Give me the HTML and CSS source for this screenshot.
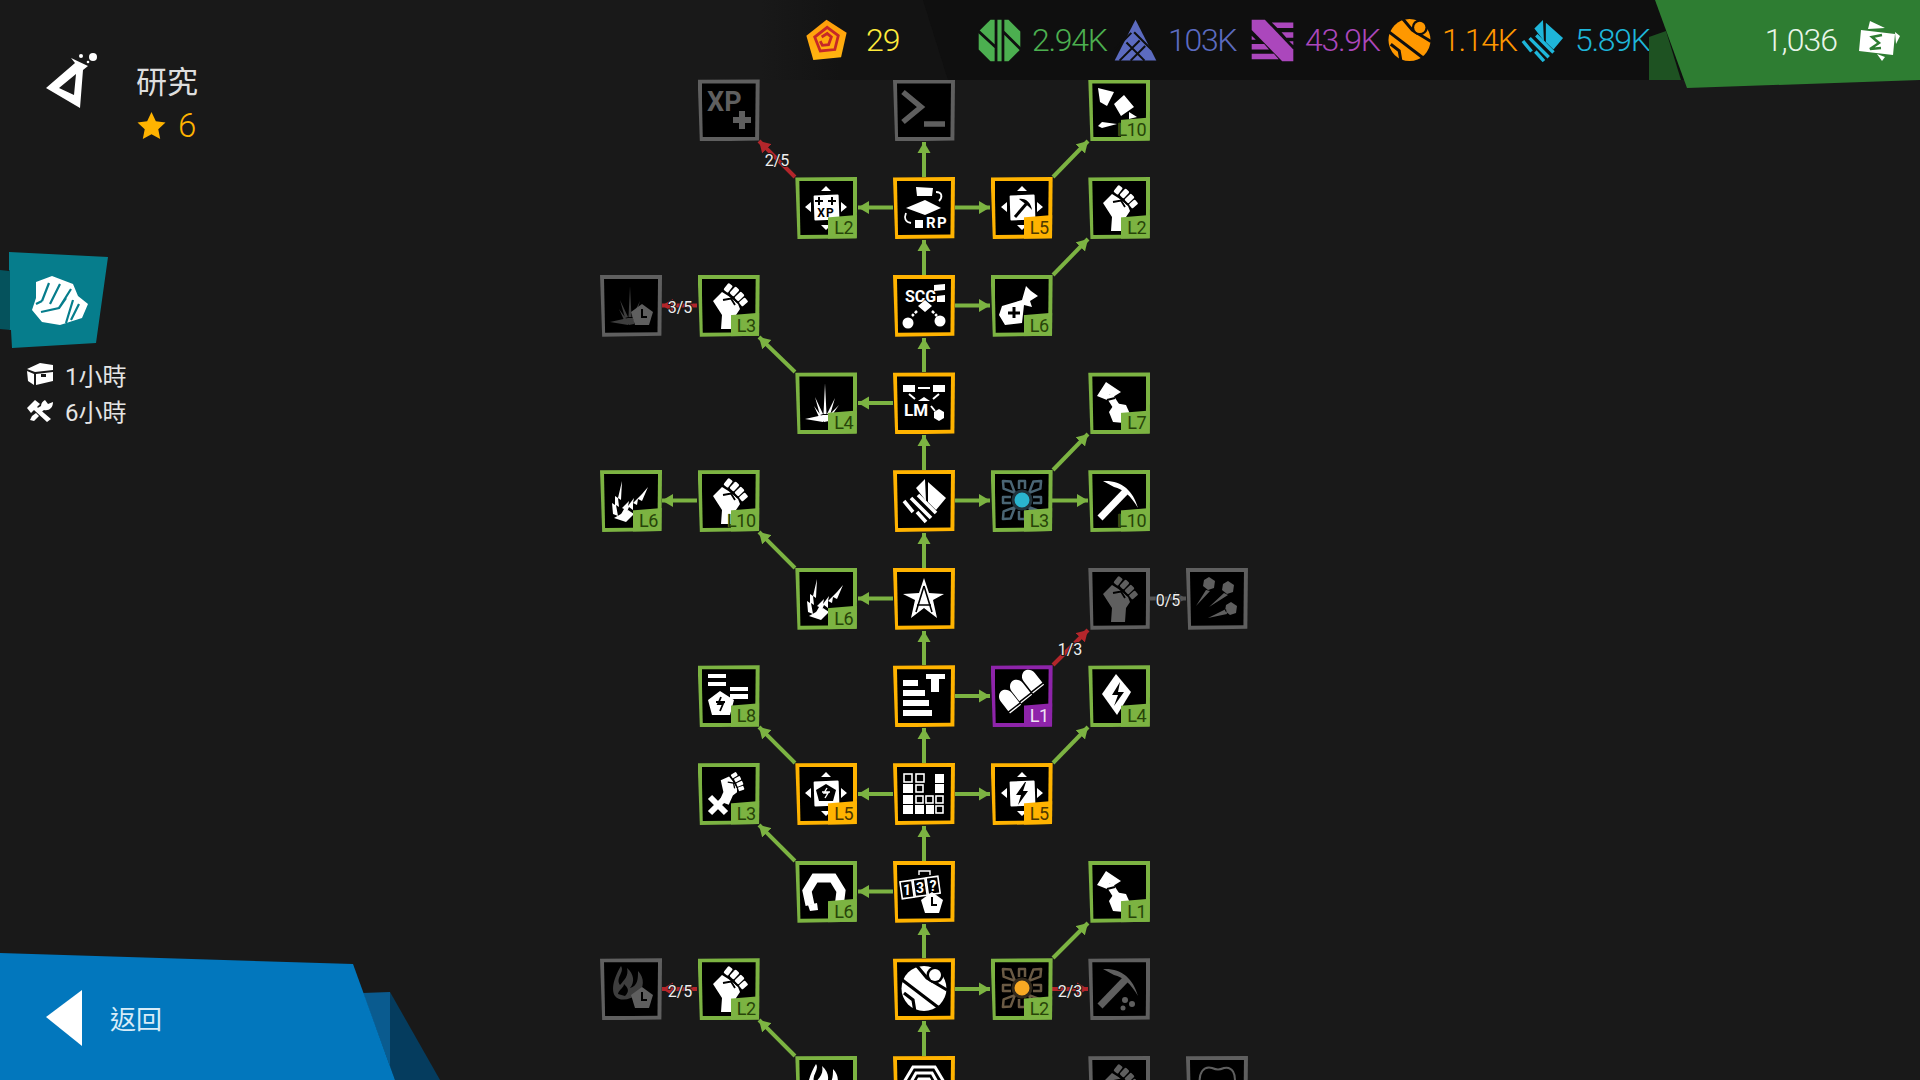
FILE: index.html
```html
<!DOCTYPE html>
<html lang="zh-Hant">
  <head>
    <meta charset="UTF-8" />
    <meta name="viewport" content="width=device-width, initial-scale=1.0" />
    <title>研究</title>
    <link rel="stylesheet" href="styles.css">
  </head>
  <body>
    <!-- shared icon shapes, all drawn in a 62x62 box -->
    <svg class="defs" aria-hidden="true">
      <defs>
        <linearGradient id="tokenfill" x1="0" y1="0" x2="0" y2="1">
          <stop offset="0" stop-color="#ff9d0a" />
          <stop offset="1" stop-color="#ffb511" />
        </linearGradient>
        <marker id="head-green" markerUnits="userSpaceOnUse" markerWidth="12" markerHeight="14" refX="11" refY="7" orient="auto">
          <path d="M0 0.5 11 7 0 13.5Z" fill="#7cb342" />
        </marker>
        <marker id="head-red" markerUnits="userSpaceOnUse" markerWidth="12" markerHeight="14" refX="11" refY="7" orient="auto">
          <path d="M0 0.5 11 7 0 13.5Z" fill="#b3262b" />
        </marker>
        <marker id="head-grey" markerUnits="userSpaceOnUse" markerWidth="12" markerHeight="14" refX="11" refY="7" orient="auto">
          <path d="M0 0.5 11 7 0 13.5Z" fill="#555" />
        </marker>

        <g id="fist">
          <path d="M15 26 24 17 32 22 40 29 42 34 38 40 37 54H23L24 40Z" />
          <rect x="-2.8" y="-4.5" width="5.6" height="8.5" rx="1.2" transform="translate(30 13) rotate(38)" />
          <rect x="-2.8" y="-4.5" width="5.6" height="9" rx="1.2" transform="translate(36.5 16.5) rotate(42)" />
          <rect x="-2.8" y="-4.5" width="5.6" height="9" rx="1.2" transform="translate(41.5 21.5) rotate(46)" />
          <rect x="-2.8" y="-4" width="5.6" height="8" rx="1.2" transform="translate(45.5 27) rotate(50)" />
          <path d="M25 25 33 23.5 37 30" fill="none" stroke="#000" stroke-width="1.8" />
          <path d="M31 20 35 24M36 24 40 28" fill="none" stroke="#000" stroke-width="1.4" />
        </g>
        <g id="box">
          <path d="M31 9l5 5H26zM10 30l6-5v10zM52 30l-6-5v10zM31 53l-5-5h10z" />
          <rect x="19" y="18" width="25" height="25" rx="1" transform="rotate(-2 31 30)" />
        </g>
        <g id="bolt">
          <path d="M34 19 25 32h5l-3 10 10-14h-5l3-9Z" />
        </g>
        <g id="pick">
          <path d="M12 48 38 21" fill="none" stroke="currentColor" stroke-width="7" />
          <path d="M15 11C33 10 45 20 50 38 43 26 35 19 26 17Z" />
        </g>
        <g id="hammer">
          <path d="M9 24 18 10 33 20 25 25 22 22 19 28Z" />
          <path d="M21 23 30 37" fill="none" stroke="currentColor" stroke-width="7" />
          <path d="M27 31 38 33 42 42 36 51 25 50 21 40Z" />
          <path d="M19 28 27 26" fill="none" stroke="#000" stroke-width="2" />
        </g>
        <g id="burst">
          <path d="M30 11 31.5 42H28.500ZM20 25 28 42 25 43ZM19 34 27 45 24 45ZM40 26 32 42 35 43ZM44 33 33 44 35 46ZM10 47 28 43 30 48 28 50ZM28 43H35L34 49 29 50Z" />
        </g>
        <g id="sparks">
          <path d="M13 44 12 33 15 35 15 26 18 28 22 11 21 30 18 28 19 37 16 35 18 46Z" />
          <path d="M19 48 24 39 22 38 29 31 28 36 34 28 33 33 42 24 48 17 42 31 38 29 37 35 33 33 33 40 29 37 26 44Z" />
          <path d="M14 48 28 40 34 44 26 52Z" />
        </g>
        <g id="flames">
          <path d="M21 8C25 14 15 20 20 27 24 22 29 18 27 10 34 16 35 24 30 30 38 28 38 20 38 13 45 20 44 30 38 36 30 42 20 44 15 38 10 30 16 16 21 8Z" />
          <path d="M18 36C19 31 24 30 24 26 28 30 30 33 25 38Z" fill="#000" />
        </g>
        <g id="pent">
          <path d="M42 29 53 37 49 50H35L31 37Z" />
          <path d="M42 34V42H47" fill="none" stroke="#000" stroke-width="2" />
        </g>
        <g id="crystal">
          <path d="M23 18 32 9 33 31ZM35 12 53 28 43 40 35 32Z" />
          <path d="M11 31 20 42M18 28 38 48M25 25 43 43M24 42 33 52" fill="none" stroke="currentColor" stroke-width="3.6" />
        </g>
        <g id="orb">
          <circle cx="31" cy="30.500" r="22.500" />
          <path d="M8 21 46 50M24 8 34 20 54 32M11 35 20 42 22 54" fill="none" stroke="var(--cut, #000)" stroke-width="3.200" />
          <circle cx="42" cy="17" r="8.500" fill="var(--cut, #000)" />
          <circle cx="42" cy="17" r="6" />
        </g>
        <g id="shell">
          <path d="M-7 9V-6C-7-11-3-14 0-14 3-14 7-11 7-6V9Z" />
          <path d="M-8 7H8" stroke="#000" stroke-width="1.5" />
        </g>
        <g id="mine" fill="none" stroke="currentColor" stroke-width="2.500" stroke-linejoin="round">
          <path d="M31 20 26 9 31 3 36 9Z" transform="rotate(45 31 30)" />
          <path d="M31 20 26 9 31 3 36 9Z" transform="rotate(135 31 30)" />
          <path d="M31 20 26 9 31 3 36 9Z" transform="rotate(225 31 30)" />
          <path d="M31 20 26 9 31 3 36 9Z" transform="rotate(315 31 30)" />
          <path d="M28 19 28 11H34V19" />
          <path d="M28 19 28 11H34V19" transform="rotate(90 31 30)" />
          <path d="M28 19 28 11H34V19" transform="rotate(180 31 30)" />
          <path d="M28 19 28 11H34V19" transform="rotate(270 31 30)" />
        </g>
        <g id="res-green">
          <path d="M18 1H44L61 18V44L44 61H18L1 44V18Z" />
          <path d="M0 17 26 41M26 0V62M36 0V62M36 18 62 44" fill="none" stroke="#0f0f0f" stroke-width="4" />
        </g>
        <g id="res-blue">
          <path d="M31 1 61 60H1Z" />
          <path d="M0 45 25 20M8 60 37 31M24 60 45 39M18 34 44 60M29 19 54 44" fill="none" stroke="#0f0f0f" stroke-width="3" />
        </g>
        <g id="res-purple">
          <path d="M1 1H20L61 44V61H45L1 16Z" />
          <path d="M30 5H61V13H38ZM44 19H61V27H51ZM55 32 61 38V32ZM1 24 7 30H1ZM1 36H19L26 44H1ZM1 50H33L40 58H1Z" />
        </g>
      </defs>
    </svg>

    <!-- links between the research nodes -->
    <svg class="edges" viewBox="0 0 1920 1080">
      <g class="edge-green">
        <line x1="924" y1="177" x2="924" y2="142" />
        <line x1="924" y1="275" x2="924" y2="240" />
        <line x1="924" y1="372" x2="924" y2="338" />
        <line x1="924" y1="470" x2="924" y2="435" />
        <line x1="924" y1="568" x2="924" y2="533" />
        <line x1="924" y1="665" x2="924" y2="631" />
        <line x1="924" y1="763" x2="924" y2="728" />
        <line x1="924" y1="861" x2="924" y2="826" />
        <line x1="924" y1="958" x2="924" y2="924" />
        <line x1="924" y1="1056" x2="924" y2="1021" />

        <line x1="893" y1="207.5" x2="858" y2="207.5" />
        <line x1="955" y1="207.5" x2="990" y2="207.5" />
        <line x1="955" y1="305.5" x2="990" y2="305.5" />
        <line x1="893" y1="403" x2="858" y2="403" />
        <line x1="955" y1="500.5" x2="990" y2="500.5" />
        <line x1="1052" y1="500.5" x2="1088" y2="500.5" />
        <line x1="697" y1="500.5" x2="662" y2="500.5" />
        <line x1="893" y1="598.5" x2="858" y2="598.5" />
        <line x1="955" y1="696" x2="990" y2="696" />
        <line x1="893" y1="794" x2="858" y2="794" />
        <line x1="955" y1="794" x2="990" y2="794" />
        <line x1="893" y1="891.5" x2="858" y2="891.5" />
        <line x1="955" y1="989" x2="990" y2="989" />

        <line x1="1053" y1="177" x2="1088" y2="141" />
        <line x1="1053" y1="275" x2="1088" y2="239" />
        <line x1="795" y1="372" x2="759" y2="337" />
        <line x1="1053" y1="470" x2="1088" y2="434" />
        <line x1="795" y1="568" x2="759" y2="532" />
        <line x1="795" y1="763" x2="759" y2="727" />
        <line x1="1053" y1="763" x2="1088" y2="727" />
        <line x1="795" y1="861" x2="759" y2="825" />
        <line x1="1053" y1="958" x2="1088" y2="923" />
        <line x1="795" y1="1056" x2="759" y2="1020" />
      </g>
      <g class="edge-red">
        <line x1="795" y1="177" x2="759" y2="141" />
        <line x1="697" y1="305.5" x2="662" y2="305.5" />
        <line x1="1053" y1="665" x2="1088" y2="630" />
        <line x1="697" y1="989" x2="662" y2="989" />
        <line x1="1052" y1="989" x2="1088" y2="989" />
      </g>
      <g class="edge-grey">
        <line x1="1150" y1="598.5" x2="1186" y2="598.5" />
      </g>
      <g class="edge-labels">
        <text x="777" y="160">2/5</text>
        <text x="680" y="307">3/5</text>
        <text x="1070" y="649">1/3</text>
        <text x="1168" y="600">0/5</text>
        <text x="680" y="991">2/5</text>
        <text x="1070" y="991">2/3</text>
      </g>
    </svg>

    <main class="tree">
      <!-- row 1 -->
      <div class="node off c2 r1">
        <svg class="icon" viewBox="0 0 62 62"><text class="tx" x="9" y="32" font-size="27">XP</text><path d="M44 32V50M35 41H53" fill="none" stroke="currentColor" stroke-width="6" /></svg>
      </div>
      <div class="node off c4 r1">
        <svg class="icon" viewBox="0 0 62 62"><path d="M10 13 28 28 10 43M31 45H52" fill="none" stroke="currentColor" stroke-width="5.5" /></svg>
      </div>
      <div class="node green c6 r1">
        <svg class="icon" viewBox="0 0 62 62"><path d="M10 9 26 13 19 27 12 23ZM36 16 46 28 33 37 26 25ZM41 33 49 38 41 40ZM10 47 14 43 29 45 14 49Z" /></svg>
        <span class="badge">L10</span>
      </div>

      <!-- row 2 -->
      <div class="node green c3 r2">
        <svg class="icon" viewBox="0 0 62 62"><use href="#box" /><path d="M24 20V28M20 24H28M37 20V28M33 24H41" stroke="#000" stroke-width="2" /><text class="tx" x="31" y="40" text-anchor="middle" font-size="12" fill="#000" letter-spacing="1">XP</text></svg>
        <span class="badge">L2</span>
      </div>
      <div class="node gold c4 r2">
        <svg class="icon" viewBox="0 0 62 62">
          <path d="M23 10 40 11 39 19 24 19ZM13 31 32 23 48 31 32 38ZM22 43H30V51H22Z" />
          <path d="M43 15C49 15 50 20 46 24M13 36C11 41 12 45 18 46" fill="none" stroke="currentColor" stroke-width="1.8" />
          <text class="tx" x="33" y="51" font-size="15" letter-spacing="1.5">RP</text>
        </svg>
      </div>
      <div class="node gold c5 r2">
        <svg class="icon" viewBox="0 0 62 62"><use href="#box" /><path d="M24 40 36 26" stroke="#000" stroke-width="3" /><path d="M28 22C35 21 40 26 41 33 37 28 33 26 28 22Z" fill="#000" /></svg>
        <span class="badge">L5</span>
      </div>
      <div class="node green c6 r2">
        <svg class="icon" viewBox="0 0 62 62"><use href="#fist" /></svg>
        <span class="badge">L2</span>
      </div>

      <!-- row 3 -->
      <div class="node off dim c1 r3">
        <svg class="icon" viewBox="0 0 62 62"><use href="#burst" class="faint" /><use href="#pent" /></svg>
      </div>
      <div class="node green c2 r3">
        <svg class="icon" viewBox="0 0 62 62"><use href="#fist" /></svg>
        <span class="badge">L3</span>
      </div>
      <div class="node gold c4 r3">
        <svg class="icon" viewBox="0 0 62 62">
          <text class="tx" x="12" y="27" font-size="16">SCG</text>
          <path d="M41 10 52 9V15L41 16ZM44 21 52 20V27H44ZM32 25 39 31 32 37 25 31Z" />
          <circle cx="15" cy="48" r="5.5" /><circle cx="47" cy="46" r="5.5" />
          <path d="M24 36 19 41M39 36 44 41" stroke="currentColor" stroke-width="2.5" stroke-dasharray="3 1.5" />
        </svg>
      </div>
      <div class="node green c5 r3">
        <svg class="icon" viewBox="0 0 62 62"><path d="M35 11 40 16 47 21 39 26 41 32 33 30 31 48 14 50 8 40 11 31 31 25Z" /><path d="M23 32V43M17 38H29" stroke="#000" stroke-width="3" /></svg>
        <span class="badge">L6</span>
      </div>

      <!-- row 4 -->
      <div class="node green c3 r4">
        <svg class="icon" viewBox="0 0 62 62"><use href="#burst" /></svg>
        <span class="badge">L4</span>
      </div>
      <div class="node gold c4 r4">
        <svg class="icon" viewBox="0 0 62 62">
          <path d="M10 13H22V20H10ZM40 13H52V20H40ZM25 15H37V17H25ZM25 29 31 25 37 29Z" />
          <path d="M16 22 22 27M46 22 40 27M38 34 42 39" stroke="currentColor" stroke-width="2" />
          <text class="tx" x="11" y="44" font-size="17">LM</text>
          <path d="M46 37 51 40V46L46 49 41 46V40Z" />
        </svg>
      </div>
      <div class="node green c6 r4">
        <svg class="icon" viewBox="0 0 62 62"><use href="#hammer" /></svg>
        <span class="badge">L7</span>
      </div>

      <!-- row 5 -->
      <div class="node green c1 r5">
        <svg class="icon" viewBox="0 0 62 62"><use href="#sparks" /></svg>
        <span class="badge">L6</span>
      </div>
      <div class="node green c2 r5">
        <svg class="icon" viewBox="0 0 62 62"><use href="#fist" /></svg>
        <span class="badge">L10</span>
      </div>
      <div class="node gold c4 r5">
        <svg class="icon" viewBox="0 0 62 62"><use href="#crystal" /></svg>
      </div>
      <div class="node green c5 r5">
        <svg class="icon mine-blue" viewBox="0 0 62 62"><use href="#mine" /><circle class="core" cx="31" cy="30" r="9" /></svg>
        <span class="badge">L3</span>
      </div>
      <div class="node green c6 r5">
        <svg class="icon" viewBox="0 0 62 62"><use href="#pick" /></svg>
        <span class="badge">L10</span>
      </div>

      <!-- row 6 -->
      <div class="node green c3 r6">
        <svg class="icon" viewBox="0 0 62 62"><use href="#sparks" /></svg>
        <span class="badge">L6</span>
      </div>
      <div class="node gold c4 r6">
        <svg class="icon" viewBox="0 0 62 62"><path d="M31 10 36 25 51 26 40 32 44 50 31 40 18 50 22 32 10 26 26 25Z" /><path d="M31 18 23 44M31 18 39 44M24 37H38" fill="none" stroke="#000" stroke-width="1.6" /></svg>
      </div>
      <div class="node off c6 r6">
        <svg class="icon" viewBox="0 0 62 62"><use href="#fist" /></svg>
      </div>
      <div class="node off dim c7 r6">
        <svg class="icon" viewBox="0 0 62 62">
          <path d="M23 9 29 13 28 20 22 22 17 18 18 12ZM20 22 10 38 24 23ZM42 13 48 17 47 24 41 26 36 22 37 16ZM38 25 23 39 42 27ZM45 34 51 38 50 45 44 47 39 43 40 37ZM40 41 22 50 41 46Z" />
        </svg>
      </div>

      <!-- row 7 -->
      <div class="node green c2 r7">
        <svg class="icon" viewBox="0 0 62 62"><path d="M10 9H28V13H10ZM10 17H28V21H10ZM32 22H50V26H32ZM32 29H50V34H32ZM22 26 36 35 32 50H14L10 35Z" /><path d="M23 32 20 39H25L22 46M18 37H27" fill="none" stroke="#000" stroke-width="1.8" /></svg>
        <span class="badge">L8</span>
      </div>
      <div class="node gold c4 r7">
        <svg class="icon" viewBox="0 0 62 62"><path d="M10 15H25V21H10ZM10 25H32V31H10ZM10 35H36V41H10ZM10 45H39V51H10ZM33 9H52V14H46V27H38V14H33Z" /></svg>
      </div>
      <div class="node purple c5 r7">
        <svg class="icon" viewBox="0 0 62 62">
          <use href="#shell" transform="translate(42 17) rotate(-38)" />
          <use href="#shell" transform="translate(30 27) rotate(-38)" />
          <use href="#shell" transform="translate(19 37) rotate(-38)" />
        </svg>
        <span class="badge">L1</span>
      </div>
      <div class="node green c6 r7">
        <svg class="icon" viewBox="0 0 62 62"><path d="M28 9 43 27 29 50 14 29Z" /><path d="M32 17 24 30H30L26 41 36 27H30Z" fill="#000" /></svg>
        <span class="badge">L4</span>
      </div>

      <!-- row 8 -->
      <div class="node green c2 r8">
        <svg class="icon" viewBox="0 0 62 62"><g transform="translate(19 -4) rotate(20) scale(.72)"><use href="#fist" /></g><path d="M12 34 28 50M12 50 28 34" stroke="currentColor" stroke-width="6" /></svg>
        <span class="badge">L3</span>
      </div>
      <div class="node gold c3 r8">
        <svg class="icon" viewBox="0 0 62 62"><use href="#box" /><path d="M31 21 41 27 38 38H24L21 27Z" fill="#000" /><path d="M32 25 29 30H33L30 35M27 29H35" fill="none" stroke="#fff" stroke-width="1.4" /></svg>
        <span class="badge">L5</span>
      </div>
      <div class="node gold c4 r8">
        <svg class="icon" viewBox="0 0 62 62">
          <g class="cells-on">
            <rect x="42" y="11" width="9" height="9" /><rect x="42" y="21" width="9" height="9" />
            <rect x="10" y="21" width="10" height="9" /><rect x="10" y="32" width="10" height="9" />
            <rect x="10" y="42" width="10" height="9" /><rect x="22" y="42" width="9" height="9" /><rect x="33" y="42" width="8" height="9" />
          </g>
          <g class="cells-off">
            <rect x="11" y="11" width="8" height="8" /><rect x="23" y="11" width="8" height="8" />
            <rect x="23" y="22" width="7" height="7" /><rect x="23" y="33" width="7" height="7" />
            <rect x="33" y="33" width="7" height="7" /><rect x="43" y="33" width="7" height="7" />
            <rect x="43" y="43" width="7" height="7" />
          </g>
        </svg>
      </div>
      <div class="node gold c5 r8">
        <svg class="icon" viewBox="0 0 62 62"><use href="#box" /><use href="#bolt" fill="#000" /></svg>
        <span class="badge">L5</span>
      </div>

      <!-- row 9 -->
      <div class="node green c3 r9">
        <svg class="icon" viewBox="0 0 62 62"><path d="M15 44 12 30 20 17H38L46 30 44 46" fill="none" stroke="currentColor" stroke-width="9" /><path d="M13 44 22 42 23 49 15 50Z" /></svg>
        <span class="badge">L6</span>
      </div>
      <div class="node gold c4 r9">
        <svg class="icon" viewBox="0 0 62 62">
          <path d="M26 14V10H37V14" fill="none" stroke="currentColor" stroke-width="1.4" />
          <g class="cells-off">
            <rect x="8" y="20" width="12" height="17" transform="rotate(-8 14 28)" />
            <rect x="21" y="18" width="12" height="17" transform="rotate(-8 27 26)" />
            <rect x="34" y="16" width="12" height="17" transform="rotate(-8 40 24)" />
          </g>
          <text class="tx" x="14" y="34" font-size="14" text-anchor="middle">1</text>
          <text class="tx" x="27" y="32" font-size="14" text-anchor="middle">3</text>
          <text class="tx" x="40" y="30" font-size="14" text-anchor="middle">?</text>
          <use href="#pent" transform="translate(-3 2)" />
        </svg>
      </div>
      <div class="node green c6 r9">
        <svg class="icon" viewBox="0 0 62 62"><use href="#hammer" /></svg>
        <span class="badge">L1</span>
      </div>

      <!-- row 10 -->
      <div class="node off dim c1 r10">
        <svg class="icon" viewBox="0 0 62 62"><use href="#flames" class="faint" /><use href="#pent" /></svg>
      </div>
      <div class="node green c2 r10">
        <svg class="icon" viewBox="0 0 62 62"><use href="#fist" /></svg>
        <span class="badge">L2</span>
      </div>
      <div class="node gold c4 r10">
        <svg class="icon" viewBox="0 0 62 62"><use href="#orb" /></svg>
      </div>
      <div class="node green c5 r10">
        <svg class="icon mine-orange" viewBox="0 0 62 62"><use href="#mine" /><circle class="core" cx="31" cy="30" r="9" /></svg>
        <span class="badge">L2</span>
      </div>
      <div class="node off c6 r10">
        <svg class="icon" viewBox="0 0 62 62"><use href="#pick" /><circle cx="37" cy="42" r="3" /><circle cx="44" cy="46" r="3" /><circle cx="35" cy="50" r="2.5" /></svg>
      </div>

      <!-- row 11, cut by the window -->
      <div class="node green c3 r11">
        <svg class="icon" viewBox="0 0 62 62"><use href="#flames" /></svg>
      </div>
      <div class="node gold c4 r11">
        <svg class="icon" viewBox="0 0 62 62"><path d="M8 31 20 11H42L54 31M14 33 23 17H39L48 33M20 34 26 23H36L42 34" fill="none" stroke="currentColor" stroke-width="3" /></svg>
      </div>
      <div class="node off c6 r11">
        <svg class="icon" viewBox="0 0 62 62"><use href="#fist" /></svg>
      </div>
      <div class="node off c7 r11">
        <svg class="icon" viewBox="0 0 62 62"><path d="M14 30C12 16 18 10 26 12 31 14 33 14 38 12 46 10 51 18 48 30" fill="none" stroke="currentColor" stroke-width="2" /></svg>
      </div>
    </main>

    <header class="topbar">
      <div class="tokens">
        <svg class="res-icon" viewBox="0 0 62 62">
          <path d="M31 1 60 20 52 55 12 59 2 24Z" fill="url(#tokenfill)" />
          <path d="M32 12 48 24 43 44 22 46 14 26ZM24 26 32 21 38 26 34 37 25 38 22 32" fill="none" stroke="#c62828" stroke-width="4" />
        </svg>
        <span class="tokens-num">29</span>
      </div>
      <div class="stats">
        <div class="stat stat-green">
          <svg class="res-icon" viewBox="0 0 62 62"><use href="#res-green" /></svg><span>2.94K</span>
        </div>
        <div class="stat stat-blue">
          <svg class="res-icon" viewBox="0 0 62 62"><use href="#res-blue" /></svg><span>103K</span>
        </div>
        <div class="stat stat-purple">
          <svg class="res-icon" viewBox="0 0 62 62"><use href="#res-purple" /></svg><span>43.9K</span>
        </div>
        <div class="stat stat-orange">
          <svg class="res-icon" viewBox="8 8 46 46"><use href="#orb" /></svg><span>1.14K</span>
        </div>
        <div class="stat stat-cyan">
          <svg class="res-icon" viewBox="9 8 45 45"><use href="#crystal" /></svg><span>5.89K</span>
        </div>
      </div>
    </header>

    <div class="cash">
      <span>1,036</span>
      <svg class="cash-icon" viewBox="0 0 44 44">
        <path d="M13 3 28 10 11 11ZM38 14 43 18 39 26ZM20 36 28 39 25 43Z" fill="#fff" />
        <path d="M4 12 38 16 36 37 2 33Z" fill="#fff" />
        <path d="M25 17 15 19 22 25 13 31 24 30" fill="none" stroke="#2e7d32" stroke-width="2.5" />
      </svg>
    </div>

    <section class="research">
      <svg class="flask" viewBox="42 48 60 64">
        <path d="M46 88 75 63 71 58 88 66 83 70 80 108ZM59 88 74 95 76 74Z" fill="#fff" fill-rule="evenodd" />
        <circle cx="93" cy="57" r="4" fill="#fff" /><circle cx="81" cy="56" r="2" fill="#fff" /><circle cx="88" cy="62" r="1.3" fill="#fff" />
      </svg>
      <div>
        <h1 class="research-title">研究</h1>
        <div class="research-stars">
          <svg class="star" viewBox="0 0 30 30"><path d="M15 1 19.500 10.500 29.500 12 22 19 24 29 15 24 6 29 8 19 .5 12 10.500 10.500Z" fill="#ffb300" /></svg>
          <span>6</span>
        </div>
      </div>
    </section>

    <aside class="unit">
      <div class="unit-card">
        <svg class="unit-icon" viewBox="32 275 56 50">
          <path d="M36 282 52 276 73 284 78 296 88 304 82 318 60 325 42 322 32 310 36 298Z" fill="#fff" />
          <path d="M42 301 49 283M50 304 60 284M41 312 59 308 71 289M59 308 66 298M73 300 66 323M79 304 71 320M42 301 36 304" fill="none" stroke="#067d8c" stroke-width="2.2" />
        </svg>
      </div>
      <div class="unit-row">
        <svg class="unit-row-icon" viewBox="0 0 28 24">
          <path d="M1 7 14 1 27 3 27 8 9 10ZM1 9 8 12 8 23 2 19ZM10 12 27 10 27 19 10 23Z" fill="#fff" />
          <path d="M15 12H20V15H15Z" fill="#191919" />
        </svg>
        <span>1小時</span>
      </div>
      <div class="unit-row">
        <svg class="unit-row-icon" viewBox="0 0 28 24">
          <path d="M1 10 9 2 14 6 11 9 25 21 21 24 8 12 5 15ZM19 2 22 6 27 4C27 10 23 13 18 12L14 15 10 11 15 8C15 5 17 3 19 2ZM6 18 10 15 13 18 8 23 4 22Z" fill="#fff" />
        </svg>
        <span>6小時</span>
      </div>
    </aside>

    <nav class="back">
      <svg class="back-arrow" viewBox="0 0 36 56"><path d="M0 27 36 0V56Z" fill="#fff" /></svg>
      <span>返回</span>
    </nav>
  </body>
</html>
```

FILE: styles.css
```css
* {
  margin: 0;
  padding: 0;
  box-sizing: border-box;
}
html,
body {
  width: 1920px;
  height: 1080px;
  overflow: hidden;
}
body {
  position: relative;
  background: #191919;
  color: #e0e0e0;
  font-family: Roboto, "Noto Sans CJK TC", sans-serif;
}
.defs {
  position: absolute;
  width: 0;
  height: 0;
}

/* tree */
.edges {
  position: absolute;
  left: 0;
  top: 0;
  width: 1920px;
  height: 1080px;
}
.edges line {
  stroke-width: 4;
}
.edge-green line {
  stroke: #7cb342;
  marker-end: url(#head-green);
}
.edge-red line {
  stroke: #b3262b;
  marker-end: url(#head-red);
}
.edge-grey line {
  stroke: #555;
  marker-end: url(#head-grey);
}
.edge-labels text {
  font-size: 16px;
  fill: #eee;
  text-anchor: middle;
  dominant-baseline: central;
  stroke: #191919;
  stroke-width: 2px;
  paint-order: stroke;
}
.tree {
  position: absolute;
  left: 582.2px;
  top: 61.6px;
  display: grid;
  grid-template-columns: repeat(7, 97.67px);
  grid-auto-rows: 97.67px;
}
.c1 { grid-column: 1; }
.c2 { grid-column: 2; }
.c3 { grid-column: 3; }
.c4 { grid-column: 4; }
.c5 { grid-column: 5; }
.c6 { grid-column: 6; }
.c7 { grid-column: 7; }
.r1 { grid-row: 1; }
.r2 { grid-row: 2; }
.r3 { grid-row: 3; }
.r4 { grid-row: 4; }
.r5 { grid-row: 5; }
.r6 { grid-row: 6; }
.r7 { grid-row: 7; }
.r8 { grid-row: 8; }
.r9 { grid-row: 9; }
.r10 { grid-row: 10; }
.r11 { grid-row: 11; }

.node {
  --clr: #7cb342;
  position: relative;
  place-self: center;
  width: 62px;
  height: 62px;
  background: var(--clr);
  clip-path: polygon(0 0.5%, 100% 0, 99% 98.5%, 3.5% 100%);
  color: #fff;
}
.node::before {
  content: '';
  position: absolute;
  inset: 4px;
  background: #000;
  clip-path: polygon(0 0, 100% 0, 99% 99%, 2% 100%);
}
.gold { --clr: #ffb300; }
.green { --clr: #7cb342; }
.purple { --clr: #8e24aa; }
.off { --clr: #5f5f5f; color: #5f5f5f; }
.icon {
  position: absolute;
  left: 0;
  top: 0;
  width: 62px;
  height: 62px;
  fill: currentColor;
}
.tx {
  font-family: Roboto, sans-serif;
  font-weight: 700;
}
.faint {
  fill: #3e3e3e;
}
.cells-on rect {
  fill: currentColor;
}
.cells-off rect {
  fill: none;
  stroke: currentColor;
  stroke-width: 1.6;
}
.mine-blue { color: #4a6574; }
.mine-blue .core { fill: #2ab4cf; stroke: #22343d; stroke-width: 3; }
.mine-orange { color: #6b5a44; }
.mine-orange .core { fill: #f7a823; stroke: #33291c; stroke-width: 3; }
.badge {
  position: absolute;
  right: 0;
  bottom: 0;
  width: 29px;
  height: 24px;
  padding-right: 4px;
  background: var(--clr);
  clip-path: polygon(-20px 4px, 100% 0, 100% 100%, -20px 100%);
  font-size: 18px;
  letter-spacing: -0.4px;
  line-height: 25px;
  text-align: right;
  white-space: nowrap;
  direction: rtl;
  color: #274409;
  text-shadow: 0 0 1px var(--clr), 0 0 1px var(--clr);
}
.gold .badge { color: #4d3800; }
.purple .badge { color: #f0e2f4; }

/* resources along the top */
.topbar {
  position: absolute;
  left: 0;
  top: 0;
  width: 100%;
  height: 80px;
  padding-left: 805px;
  display: flex;
  align-items: center;
  background: linear-gradient(to right, rgba(19, 19, 19, 0) 760px, #131313 840px);
  font-size: 32px;
  font-weight: 300;
}
.topbar::before {
  content: '';
  position: absolute;
  left: 923px;
  top: 0;
  right: 0;
  bottom: 0;
  background: #0f0f0f;
  clip-path: polygon(0 0, 100% 0, 100% 100%, 25px 100%);
}
.res-icon {
  flex: none;
  width: 43px;
  height: 43px;
  fill: currentColor;
  --cut: #0f0f0f;
}
.tokens {
  position: relative;
  width: 173px;
  display: flex;
  align-items: center;
  gap: 18px;
  letter-spacing: -1px;
}
.tokens-num {
  color: #ffeb3b;
}
.stats {
  position: relative;
  display: grid;
  grid-template-columns: 136px 137px 137px 133px 128px;
}
.stat {
  display: flex;
  align-items: center;
  gap: 11px;
  letter-spacing: -1.3px;
}
.stat-green { color: #4caf50; }
.stat-blue { color: #5c6bc0; }
.stat-purple { color: #ab47bc; }
.stat-orange { color: #ff9800; }
.stat-cyan { color: #1eb6da; }

.cash {
  position: absolute;
  right: 0;
  top: 0;
  width: 272px;
  height: 88px;
  padding: 0 19px 8px 0;
  display: flex;
  justify-content: flex-end;
  align-items: center;
  gap: 20px;
  font-size: 32px;
  font-weight: 300;
  letter-spacing: -1px;
  color: #e8f5e9;
  isolation: isolate;
}
.cash::before,
.cash::after {
  content: '';
  position: absolute;
  inset: 0;
  z-index: -1;
}
.cash::before {
  background: #1e5222;
  clip-path: polygon(1px 37px, 18px 31px, 33px 80px, 1px 80px);
}
.cash::after {
  background: #2e7d32;
  clip-path: polygon(7px 0, 100% 0, 100% 80px, 39px 100%);
}
.cash-icon {
  width: 44px;
  height: 44px;
}

/* title, top left */
.research {
  position: absolute;
  left: 42px;
  top: 48px;
  display: flex;
  gap: 34px;
}
.flask {
  width: 60px;
  height: 64px;
}
.research-title {
  padding-top: 14px;
  font-size: 31px;
  font-weight: 400;
  line-height: 42px;
  color: #dedede;
}
.research-stars {
  display: flex;
  align-items: center;
  gap: 12px;
  height: 42px;
  padding-left: 1px;
  font-size: 33px;
  font-weight: 300;
  color: #ffb300;
}
.star {
  width: 29px;
  height: 29px;
}

/* selected unit */
.unit {
  position: absolute;
  left: 0;
  top: 252px;
}
.unit-card {
  position: relative;
  width: 108px;
  height: 96px;
  margin-bottom: 8px;
  display: flex;
  justify-content: center;
  align-items: center;
  padding-left: 12px;
  background: linear-gradient(#067d8c, #067d8c) no-repeat 9px 0 / 100px 96px;
  clip-path: polygon(9px 0, 100% 5px, 96px 91px, 12px 100%, 11px 78px, 0 77px, 0 18px, 9px 19px);
}
.unit-card::before {
  content: '';
  position: absolute;
  left: 0;
  top: 18px;
  width: 10px;
  height: 60px;
  background: #05525c;
}
.unit-icon {
  width: 56px;
  height: 50px;
}
.unit-row {
  height: 36px;
  padding-left: 26px;
  display: flex;
  align-items: center;
  gap: 11px;
  font-size: 24px;
  color: #e4e4e4;
}
.unit-row-icon {
  width: 28px;
  height: 24px;
}

/* back button */
.back {
  position: absolute;
  left: 0;
  bottom: 0;
  width: 445px;
  height: 127px;
  padding: 2px 0 0 46px;
  display: flex;
  align-items: center;
  gap: 28px;
  font-size: 26px;
  color: #d8ecf8;
  isolation: isolate;
}
.back::before {
  content: '';
  position: absolute;
  inset: 0;
  z-index: -1;
  background: #0277bd;
  clip-path: polygon(0 0, 353px 11px, 395px 100%, 0 100%);
}
.back::after {
  content: '';
  position: absolute;
  inset: 0;
  z-index: -2;
  background: linear-gradient(to right, #0a5b8f 390px, #053c5e 390px);
  clip-path: polygon(363px 40px, 390px 39px, 440px 100%, 395px 100%);
}
.back-arrow {
  width: 36px;
  height: 56px;
}
```
